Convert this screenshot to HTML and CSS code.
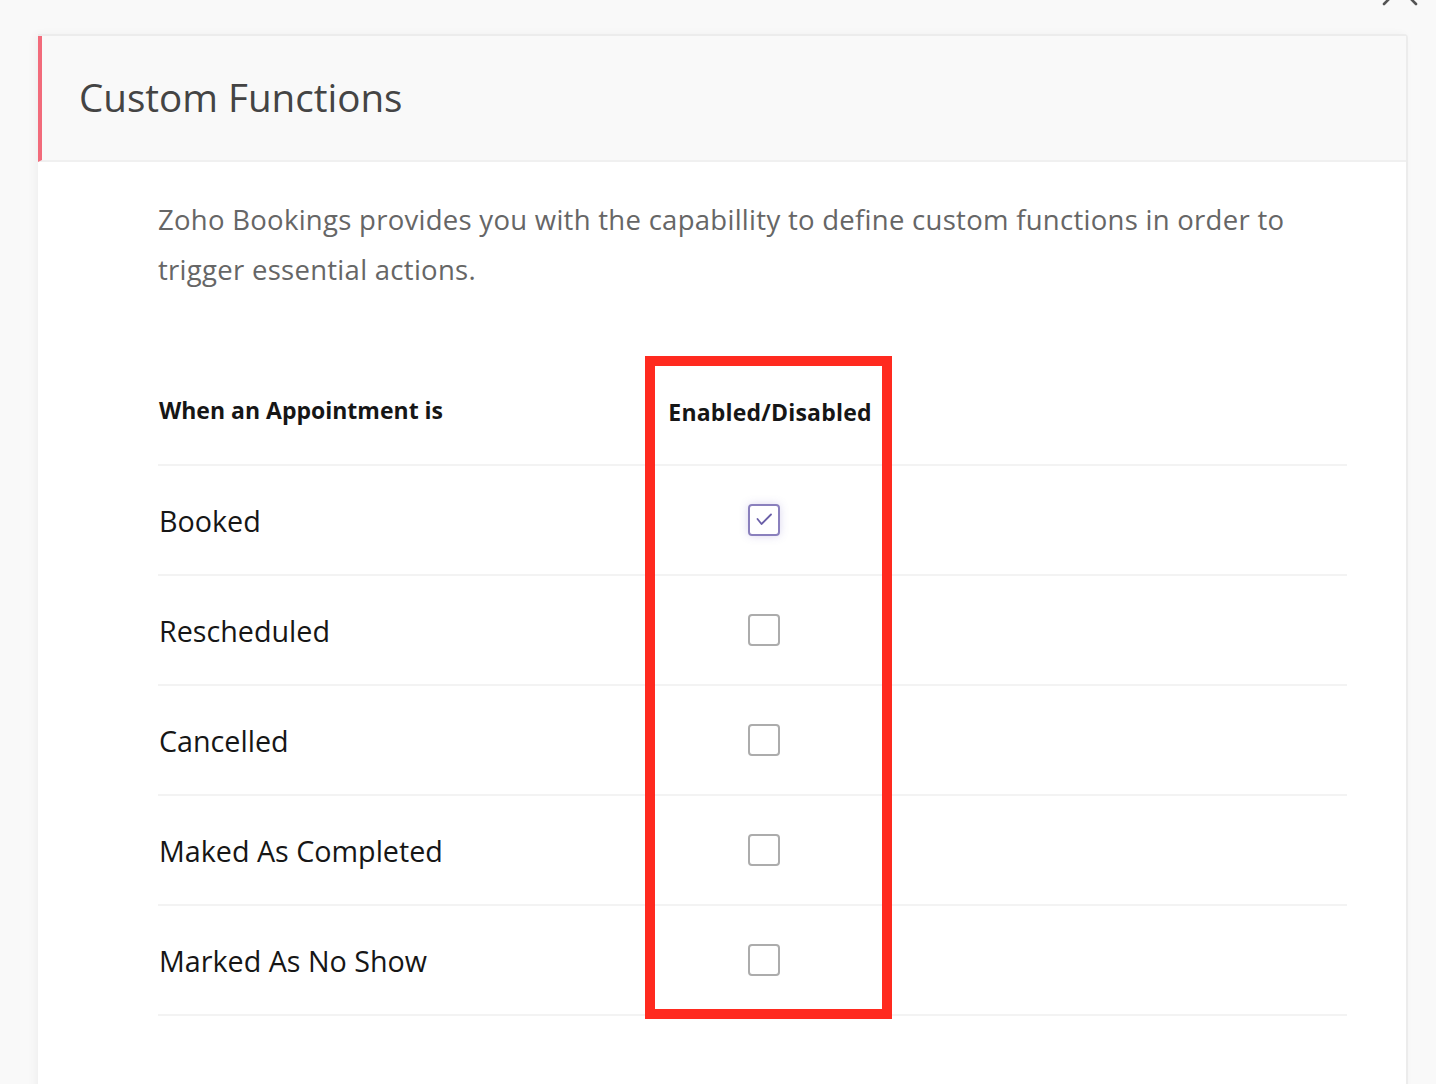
FILE: index.html
```html
<!DOCTYPE html>
<html>
<head>
<meta charset="utf-8">
<link rel="stylesheet" href="styles.css">
</head>
<body>
<div class="page">
  <svg class="close" width="36" height="36" viewBox="0 0 36 36"><path d="M2 34 L34 2 M2 2 L34 34" stroke="#555" stroke-width="2.6" stroke-linecap="round" fill="none"/></svg>
  <div class="card">
    <div class="card-head"><h1 class="title">Custom Functions</h1></div>
    <div class="card-body">
      <p class="desc">Zoho Bookings provides you with the capabillity to define custom functions in order to trigger essential actions.</p>
      <div class="table">
        <div class="row head">
          <div class="c1">When an Appointment is</div>
          <div class="c2">Enabled/Disabled</div>
        </div>
        <div class="row">
          <div class="c1">Booked</div>
          <div class="c2"><span class="cb checked"><svg width="28" height="28" viewBox="0 0 28 28"><path d="M7.5 13 L11.5 18 L21 8.5" stroke="#6a5fa8" stroke-width="1.8" fill="none" stroke-linecap="round" stroke-linejoin="round"/></svg></span></div>
        </div>
        <div class="row">
          <div class="c1">Rescheduled</div>
          <div class="c2"><span class="cb"></span></div>
        </div>
        <div class="row">
          <div class="c1">Cancelled</div>
          <div class="c2"><span class="cb"></span></div>
        </div>
        <div class="row">
          <div class="c1">Maked As Completed</div>
          <div class="c2"><span class="cb"></span></div>
        </div>
        <div class="row">
          <div class="c1">Marked As No Show</div>
          <div class="c2"><span class="cb"></span></div>
        </div>
        <div class="highlight"></div>
      </div>
    </div>
  </div>
</div>
</body>
</html>
```
FILE: styles.css
```css
html, body {
  margin: 0;
  padding: 0;
  background: #f9f9f9;
  font-family: "Open Sans", "Lato", sans-serif;
}
.page {
  position: relative;
  height: 1084px;
  overflow: hidden;
  padding: 34px 28px 0 38px;
  box-sizing: border-box;
}
.close {
  position: absolute;
  left: 1382px;
  top: -30px;
}
.card {
  background: #fff;
  border: 2px solid #ececec;
  border-left: none;
  border-bottom: none;
  border-radius: 0 4px 0 0;
  height: 1100px;
  box-shadow: -3px 0 8px rgba(0,0,0,0.04);
}
.card-head {
  background: #f9f9f9;
  border-left: 4px solid #f26b7b;
  border-bottom: 2px solid #f0f0f0;
  height: 124px;
  display: flex;
  align-items: center;
  padding-left: 37px;
}
.title {
  margin: 0;
  font-size: 38.6px;
  font-weight: 400;
  color: #444;
  margin-top: -2px;
}
.card-body {
  padding: 33px 59px 0 120px;
}
.desc {
  margin: 0;
  font-size: 27.5px;
  letter-spacing: 0.28px;
  line-height: 50px;
  color: #666;
}
.table {
  position: relative;
  margin-top: 61px;
}
.row {
  display: grid;
  grid-template-columns: 497px 230px 1fr;
  height: 110px;
  align-items: center;
  border-bottom: 2px solid #f3f3f3;
  box-sizing: border-box;
}
.row .c1 {
  font-size: 28.7px;
  color: #161616;
  padding-left: 1px;
}
.row.head .c1 {
  font-size: 23px;
  font-weight: 700;
}
.row.head .c2 {
  font-size: 23px;
  font-weight: 700;
  letter-spacing: 0.2px;
  color: #161616;
  text-align: center;
  padding-top: 3px;
}
.cb {
  display: flex;
  align-items: center;
  justify-content: center;
  width: 32px;
  height: 32px;
  box-sizing: border-box;
  border: 2px solid #acacac;
  border-radius: 4px;
  margin-left: 93px;
}
.cb.checked {
  border-color: #8a80bd;
  box-shadow: 0 0 8px rgba(110, 95, 190, 0.25);
}
.highlight {
  position: absolute;
  left: 487px;
  top: 0;
  width: 247px;
  height: 663px;
  border: 10px solid #ff2a1f;
  box-sizing: border-box;
}
```
